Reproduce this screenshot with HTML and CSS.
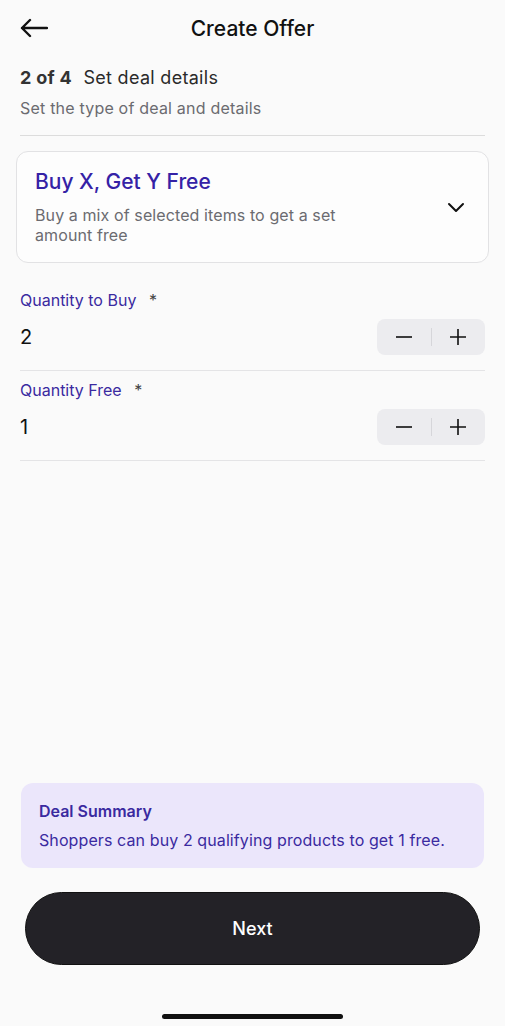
FILE: index.html
```html
<!DOCTYPE html>
<html lang="en">
<head>
    <meta charset="UTF-8">
    <meta name="viewport" content="width=device-width, initial-scale=1.0">
    <title>Create Offer</title>
    <link rel="stylesheet" href="styles.css">
</head>
<body>

    <!-- Top bar -->
    <div class="topbar">
        <svg class="back-icon" width="28" height="20" viewBox="0 0 28 20" fill="none" stroke="#111" stroke-width="2.4" stroke-linecap="round" stroke-linejoin="round">
            <path d="M27 10H2M10 2L2 10L10 18"/>
        </svg>
        <h1>Create Offer</h1>
        <span></span>
    </div>

    <div class="step">
        <p class="step-title"><b>2 of 4</b> Set deal details</p>
        <p class="step-sub">Set the type of deal and details</p>
    </div>

    <div class="divider"></div>

    <!-- Deal type selector -->
    <div class="deal-card">
        <div class="deal-text">
            <h2>Buy X, Get Y Free</h2>
            <p>Buy a mix of selected items to get a set amount free</p>
        </div>
        <svg width="20" height="12" viewBox="0 0 20 12" fill="none" stroke="#111" stroke-width="2" stroke-linecap="round" stroke-linejoin="round">
            <path d="M3 3L10 10L17 3"/>
        </svg>
    </div>

    <!-- Quantities -->
    <div class="field first">
        <label>Quantity to Buy <span class="req">*</span></label>
        <div class="field-row">
            <span class="value">2</span>
            <div class="stepper">
                <button><svg width="18" height="18" viewBox="0 0 18 18" stroke="#111" stroke-width="1.6"><path d="M1 9H17"/></svg></button>
                <span class="sep"></span>
                <button><svg width="18" height="18" viewBox="0 0 18 18" stroke="#111" stroke-width="1.6"><path d="M1 9H17M9 1V17"/></svg></button>
            </div>
        </div>
    </div>

    <div class="field">
        <label>Quantity Free <span class="req">*</span></label>
        <div class="field-row">
            <span class="value">1</span>
            <div class="stepper">
                <button><svg width="18" height="18" viewBox="0 0 18 18" stroke="#111" stroke-width="1.6"><path d="M1 9H17"/></svg></button>
                <span class="sep"></span>
                <button><svg width="18" height="18" viewBox="0 0 18 18" stroke="#111" stroke-width="1.6"><path d="M1 9H17M9 1V17"/></svg></button>
            </div>
        </div>
    </div>

    <div class="spacer"></div>

    <!-- Summary -->
    <div class="summary">
        <h3>Deal Summary</h3>
        <p>Shoppers can buy 2 qualifying products to get 1 free.</p>
    </div>

    <button class="next-button">Next</button>

    <div class="home-indicator"></div>

</body>
</html>
```

FILE: styles.css
```css
/* Reset */
* {
    margin: 0;
    padding: 0;
    box-sizing: border-box;
}

body {
    font-family: Inter, "Noto Sans", sans-serif;
    background-color: #fafafa;
    color: #111;
    height: 1026px;
    display: flex;
    flex-direction: column;
    overflow: hidden;
}

/* Top bar */
.topbar {
    height: 56px;
    padding: 0 20px;
    display: grid;
    grid-template-columns: 28px 1fr 28px;
    align-items: center;
}

.topbar h1 {
    font-size: 21px;
    font-weight: 500;
    text-align: center;
    color: #111;
}

/* Step heading */
.step {
    padding: 11px 20px 0;
}

.step-title {
    font-size: 18px;
    line-height: 22px;
    letter-spacing: 0.3px;
    color: #2a2a2a;
}

.step-title b {
    font-weight: 700;
    margin-right: 6px;
    color: #333;
}

.step-sub {
    margin-top: 9px;
    font-size: 16px;
    line-height: 20px;
    letter-spacing: 0.2px;
    color: #6b6b70;
}

.divider {
    margin: 17px 20px 0;
    height: 1px;
    background-color: #dcdcdc;
}

/* Deal card */
.deal-card {
    margin: 15px 16px 0;
    padding: 17px 22px 17px 18px;
    border: 1px solid #e2e2e4;
    border-radius: 12px;
    background-color: #fdfdfd;
    display: flex;
    justify-content: space-between;
    align-items: center;
}

.deal-text h2 {
    font-size: 21px;
    line-height: 26px;
    font-weight: 500;
    color: #3522a6;
}

.deal-text p {
    margin-top: 10px;
    max-width: 330px;
    font-size: 16px;
    line-height: 20px;
    letter-spacing: 0.1px;
    color: #6b6b70;
}

/* Quantity fields */
.field {
    margin: 0 20px;
    padding: 9px 0 15px;
    border-bottom: 1px solid #e4e4e6;
}

.field.first {
    margin-top: 17px;
    padding-top: 10px;
}

.field label {
    display: block;
    font-size: 16px;
    line-height: 20px;
    color: #3a2aa0;
}

.field .req {
    color: #444;
    margin-left: 8px;
}

.field-row {
    margin-top: 9px;
    display: flex;
    justify-content: space-between;
    align-items: center;
}

.value {
    font-size: 20px;
    color: #111;
}

.stepper {
    width: 108px;
    height: 36px;
    border-radius: 8px;
    background-color: #ececef;
    display: flex;
    align-items: center;
}

.stepper button {
    flex: 1;
    height: 100%;
    border: none;
    background: none;
    display: flex;
    align-items: center;
    justify-content: center;
    cursor: pointer;
}

.stepper .sep {
    width: 1px;
    height: 18px;
    background-color: #d6d6da;
}

.spacer {
    flex: 1;
}

/* Deal summary */
.summary {
    margin: 0 21px;
    padding: 18px;
    border-radius: 12px;
    background-color: #ebe6fb;
    color: #3a2aa0;
}

.summary h3 {
    font-size: 16px;
    line-height: 20px;
    font-weight: 600;
}

.summary p {
    margin-top: 9px;
    font-size: 16px;
    line-height: 20px;
    letter-spacing: 0.1px;
}

/* Next button */
.next-button {
    margin: 24px 25px 0;
    height: 73px;
    border: 1px solid #111;
    border-radius: 37px;
    background-color: #232227;
    color: white;
    font-family: Inter, "Noto Sans", sans-serif;
    font-size: 18px;
    font-weight: 500;
    cursor: pointer;
}

.home-indicator {
    margin: 49px auto 7px;
    width: 181px;
    height: 5px;
    border-radius: 3px;
    background-color: #111;
}
```
